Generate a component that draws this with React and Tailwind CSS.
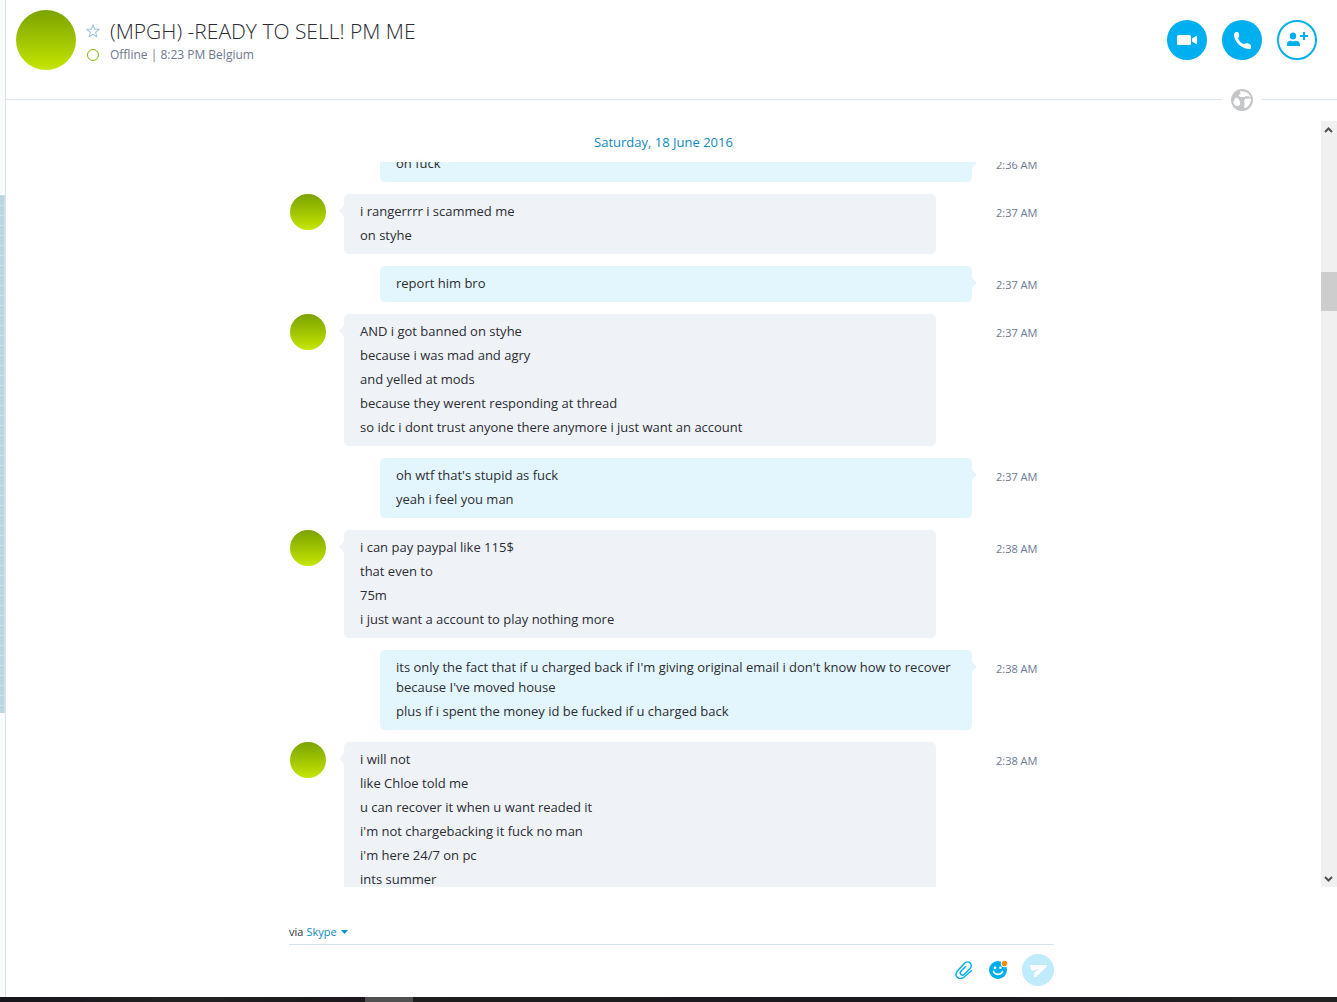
import { useState } from 'react';

const messages = [
  { mine: true, time: '2:36 AM', lines: ['oh fuck'] },
  { mine: false, time: '2:37 AM', lines: ['i rangerrrr i scammed me', 'on styhe'] },
  { mine: true, time: '2:37 AM', lines: ['report him bro'] },
  {
    mine: false,
    time: '2:37 AM',
    lines: [
      'AND i got banned on styhe',
      'because i was mad and agry',
      'and yelled at mods',
      'because they werent responding at thread',
      'so idc i dont trust anyone there anymore i just want an account',
    ],
  },
  { mine: true, time: '2:37 AM', lines: ["oh wtf that's stupid as fuck", 'yeah i feel you man'] },
  {
    mine: false,
    time: '2:38 AM',
    lines: ['i can pay paypal like 115$', 'that even to', '75m', 'i just want a account to play nothing more'],
  },
  {
    mine: true,
    time: '2:38 AM',
    lines: [
      "its only the fact that if u charged back if I'm giving original email i don't know how to recover because I've moved house",
      'plus if i spent the money id be fucked if u charged back',
    ],
  },
  {
    mine: false,
    time: '2:38 AM',
    lines: [
      'i will not',
      'like Chloe told me',
      'u can recover it when u want readed it',
      "i'm not chargebacking it fuck no man",
      "i'm here 24/7 on pc",
      'ints summer',
    ],
  },
];

function Avatar({ className }) {
  return <div className={`shrink-0 rounded-full bg-linear-to-b from-[#7aa300] to-[#c6e600] ${className}`} />;
}

function Message({ mine, time, lines }) {
  return (
    <li className="flex items-start">
      <div className="mr-[18px] w-9 shrink-0">{!mine && <Avatar className="size-9" />}</div>
      <div className="min-w-0 flex-1">
        <div className={`relative rounded-[5px] px-4 pb-[7px] pt-[5px] ${mine ? 'ml-9 bg-[#e4f6fd]' : 'mr-9 bg-[#eff3f8]'}`}>
          {lines.map((line) => (
            <p key={line} className="py-0.5 text-[13px] leading-5">{line}</p>
          ))}
          <svg
            className={`absolute top-[9px] h-4 w-[5px] ${mine ? 'left-full text-[#e4f6fd]' : 'right-full rotate-180 text-[#eff3f8]'}`}
            viewBox="0 0 5 16"
            fill="currentColor"
          >
            <path d="M0 0C0 4 2 5 4.500 7.400Q5.200 8 4.500 8.600C2 11 0 12 0 16Z" />
          </svg>
        </div>
      </div>
      <time className="ml-6 mt-[9px] w-[41px] shrink-0 whitespace-nowrap text-[11px] leading-5 text-[#6d7790]">{time}</time>
    </li>
  );
}

function Header() {
  return (
    <header className="flex h-[89px] shrink-0 items-start pl-2.5 pr-5 pt-2.5">
      <Avatar className="size-[60px]" />
      <div className="ml-2.5 min-w-0 flex-1 pt-1.5">
        <div className="flex items-center gap-2.5">
          <button type="button" aria-label="Add to favourites">
            <svg className="size-3.5" viewBox="0 0 14 14" fill="none" stroke="#a3cbdc" strokeWidth="1.200" strokeLinejoin="round">
              <path d="M7 .9 8.700 5.200 13.300 5.400 9.700 8.300 10.900 12.800 7 10.300 3.100 12.800 4.300 8.300 .7 5.400 5.300 5.200Z" />
            </svg>
          </button>
          <h1 className="truncate text-[21px] font-light leading-[30px]">(MPGH) -READY TO SELL! PM ME</h1>
        </div>
        <div className="flex items-center gap-2.5">
          <span className="mx-px size-3 rounded-full border border-[#7fb900]" />
          <p className="text-xs leading-[18px] text-[#6d7790]">Offline | 8:23 PM Belgium</p>
        </div>
      </div>
      <div className="flex gap-[15px] pt-2.5">
        <button type="button" aria-label="Video call" className="size-10 rounded-full bg-[#00aff0]">
          <svg viewBox="0 0 40 40" fill="white">
            <rect x="10" y="15" width="14" height="10" rx="1.500" />
            <path d="M25 18.500 29 16Q30 15.500 30 16.500V23.500Q30 24.500 29 24L25 21.500Z" />
          </svg>
        </button>
        <button type="button" aria-label="Call" className="size-10 rounded-full bg-[#00aff0]">
          <svg viewBox="0 0 40 40" fill="white">
            <path d="M12.300 13.200C13.500 11.700 15.800 11.700 16.700 12.800C17.600 14 17.300 16.600 16.200 18.200C16.600 20.600 19.500 23.500 21.900 24C23.500 22.900 26.200 22.700 28.300 24.500Q29 25 29 26V28Q29 29 27.500 29C19.500 29 12 21.500 12 14.500Q12 13.700 12.300 13.200Z" />
          </svg>
        </button>
        <button type="button" aria-label="Add people" className="size-10 rounded-full border-2 border-[#00aff0]">
          <svg viewBox="2 2 36 36" fill="#00aff0">
            <ellipse cx="16" cy="16" rx="3.200" ry="3.600" />
            <path d="M10 26V24.500C10 21.500 12 20.700 14 20.700Q16 22 18 20.700C20.500 20.700 23 21.500 23 24.500V26Z" />
            <path d="M26 12H28V15H31V17H28V20H26V17H23V15H26Z" />
          </svg>
        </button>
      </div>
    </header>
  );
}

function Divider() {
  return (
    <div className="flex h-[21px] shrink-0 items-center">
      <div className="h-px flex-1 bg-[#d9e4eb]" />
      <div className="flex w-10 justify-center">
        <svg className="size-[22px] shrink-0" viewBox="0 0 22 22">
          <circle cx="11" cy="11" r="11" fill="#c5c6c8" />
          <path
            fill="white"
            d="M9 2.300C14.500 1.500 19 4.500 19.900 9L18 7.200H14.500L13.500 8H9L7.500 6 9.500 5ZM4 9.500 6 8.500 8 10.500 9.200 13V15.500L7 17 4 16.500 2.200 13.500ZM14.200 9.500 17 10 18 9.200 19.900 10C20 14 17.800 17.500 14 19.300L12.800 17.500 13.800 15 13 12.500Z"
          />
        </svg>
      </div>
      <div className="h-px w-[75px] bg-[#d9e4eb]" />
    </div>
  );
}

function Scrollbar() {
  return (
    <div className="flex w-4 shrink-0 flex-col items-center bg-[#f0f0f0]">
      <svg className="h-[17px] w-4 shrink-0" viewBox="0 0 16 17" fill="none" stroke="#505050" strokeWidth="2">
        <path d="M4 11 7.500 7.500 11 11" />
      </svg>
      <div className="grow-[134]" />
      <div className="h-[39px] w-full bg-[#cdcdcd]" />
      <div className="grow-[559]" />
      <svg className="h-[17px] w-4 shrink-0" viewBox="0 0 16 17" fill="none" stroke="#505050" strokeWidth="2">
        <path d="M4 7 7.500 10.500 11 7" />
      </svg>
    </div>
  );
}

function Composer() {
  const [text, setText] = useState('');

  return (
    <div className="mx-auto h-[110px] w-full max-w-[765px] shrink-0 pt-9">
      <div className="flex h-[22px] items-center border-b border-[#d3e3ec] pb-[3px] text-[11px] leading-4">
        <label htmlFor="via" className="mr-[3px]">via</label>
        <select id="via" className="appearance-none text-[#0e89bf]">
          <option>Skype</option>
        </select>
        <svg className="pointer-events-none ml-1 h-1 w-[7px]" viewBox="0 0 7 4" fill="#0095cc">
          <path d="M0 0H7L3.500 4Z" />
        </svg>
      </div>
      <div className="mt-[9px] flex h-8 items-center">
        <input
          aria-label="Type a message"
          value={text}
          onChange={(e) => setText(e.target.value)}
          className="min-w-0 flex-1 text-[13px] outline-none"
        />
        <button type="button" aria-label="Attach file" className="mr-4">
          <svg className="size-[18px]" viewBox="0 0 18 18" fill="none" stroke="#00aff0" strokeWidth="1.500" strokeLinecap="round">
            <path d="M16.300 9.700 9.200 16C7 17.800 4 17.900 2.300 16.300C.6 14.600 .8 11.800 2.800 9.600L9.300 2.500C11 .8 13.700 .6 15.200 2C16.700 3.400 16.600 5.900 15 7.600L9.300 13.200C8.200 14.300 6.800 14.400 5.900 13.500C5 12.600 5.100 11.200 6.200 10L10.500 5.700" />
          </svg>
        </button>
        <button type="button" aria-label="Emoticons" className="mr-[15px]">
          <svg className="size-[18px] overflow-visible" viewBox="0 0 18 18">
            <circle cx="9" cy="9" r="9" fill="#00aff0" />
            <circle cx="6" cy="6.700" r="1.300" fill="white" />
            <circle cx="11.500" cy="6.700" r="1.300" fill="white" />
            <path d="M4.500 10.500C6 14.300 12 14.300 13.500 10.500" fill="none" stroke="white" strokeWidth="1.600" strokeLinecap="round" />
            <circle cx="15.500" cy="2.500" r="3.700" fill="white" />
            <circle cx="15.500" cy="2.500" r="2.700" fill="#ff8c00" />
          </svg>
        </button>
        <button type="button" aria-label="Send" className="size-8 rounded-full bg-[#bfebfb]">
          <svg viewBox="0 0 32 32" fill="white">
            <path d="M8.500 11H24.500Q25.500 11.300 25 12.200L14.500 22.500Q12.500 24 12.200 22V18.700L18 14.500 11 16.700Q9.500 16.700 9.300 15.500L8 12Q7.800 11.200 8.500 11Z" />
          </svg>
        </button>
      </div>
    </div>
  );
}

export default function App() {
  return (
    <div className="flex h-screen flex-col overflow-hidden bg-white font-['Open_Sans',sans-serif] text-[#2b2c33]">
      <div className="flex min-h-0 flex-1">
        {/* Edge of the contact list with the selected area */}
        <aside className="flex w-1.5 shrink-0 flex-col border-r border-[#d9e4eb] bg-[#f9fbfd]">
          <div className="grow-[195]" />
          <div className="grow-[518] border-r border-[#c9e0e8] bg-[repeating-linear-gradient(#c9e0e8_0_1px,#bad5df_1px_10px)]" />
          <div className="grow-[284]" />
        </aside>
        <main className="flex min-w-0 flex-1 flex-col">
          <Header />
          <Divider />
          <section className="mt-[11px] flex min-h-0 flex-1">
            <div className="relative min-w-0 flex-1 overflow-hidden">
              <ul className="mx-auto flex max-w-[747px] flex-col gap-3 pt-[25px]">
                {messages.map((message, i) => (
                  <Message key={i} {...message} />
                ))}
              </ul>
              <div className="absolute inset-x-0 top-0 h-[41px] bg-white/98 text-center text-[13px] leading-[43px] text-[#0e89bf]">
                Saturday, 18 June 2016
              </div>
            </div>
            <Scrollbar />
          </section>
          <Composer />
        </main>
      </div>
      <footer className="flex h-[5px] shrink-0 bg-[#1c1b1c]">
        <div className="grow-[365] bg-linear-to-r from-[#17151b] via-[#222122] to-[#1b171c]" />
        <div className="grow-[48] bg-[#515051]" />
        <div className="grow-[924] bg-linear-to-r from-[#1e1e1e] via-[#1a171d] to-[#222122]" />
      </footer>
    </div>
  );
}
